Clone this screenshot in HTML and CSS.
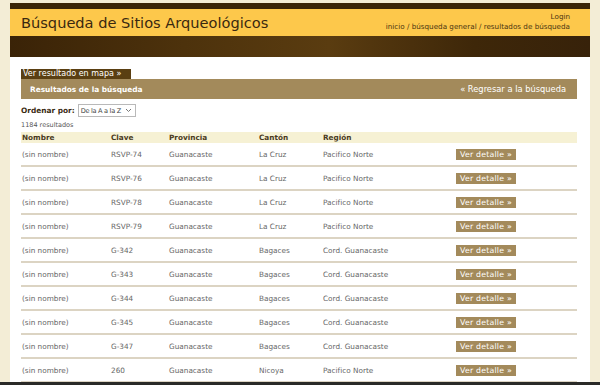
FILE: index.html
```html
<!DOCTYPE html>
<html lang="es">
<head>
<meta charset="utf-8">
<title>Búsqueda de Sitios Arqueológicos</title>
<link rel="stylesheet" href="styles.css">
</head>
<body>
<div class="page">
  <div class="topband"></div>
  <header class="header">
    <h1 class="title">Búsqueda de Sitios Arqueológicos</h1>
    <div class="nav">
      <a class="login" href="#">Login</a>
      <div class="crumbs">inicio / búsqueda general / resultados de búsqueda</div>
    </div>
  </header>
  <div class="darkband"></div>
  <main class="content">
    <a class="maptab" href="#">Ver resultado en mapa »</a>
    <div class="bar">
      <span class="bar-title">Resultados de la búsqueda</span>
      <a class="bar-back" href="#">« Regresar a la búsqueda</a>
    </div>
    <div class="order">
      <span class="order-label">Ordenar por:</span>
      <span class="select">De la A a la Z <svg class="chev" width="7" height="5" viewBox="0 0 7 5"><path d="M1 1l2.5 2.5L6 1" fill="none" stroke="#777" stroke-width="1"/></svg></span>
    </div>
    <div class="count">1184 resultados</div>
    <table class="results">
      <thead>
        <tr><th>Nombre</th><th>Clave</th><th>Provincia</th><th>Cantón</th><th>Región</th><th></th></tr>
      </thead>
      <tbody>
        <tr><td>(sin nombre)</td><td>RSVP-74</td><td>Guanacaste</td><td>La Cruz</td><td>Pacifico Norte</td><td><a class="btn" href="#">Ver detalle »</a></td></tr>
        <tr><td>(sin nombre)</td><td>RSVP-76</td><td>Guanacaste</td><td>La Cruz</td><td>Pacifico Norte</td><td><a class="btn" href="#">Ver detalle »</a></td></tr>
        <tr><td>(sin nombre)</td><td>RSVP-78</td><td>Guanacaste</td><td>La Cruz</td><td>Pacifico Norte</td><td><a class="btn" href="#">Ver detalle »</a></td></tr>
        <tr><td>(sin nombre)</td><td>RSVP-79</td><td>Guanacaste</td><td>La Cruz</td><td>Pacifico Norte</td><td><a class="btn" href="#">Ver detalle »</a></td></tr>
        <tr><td>(sin nombre)</td><td>G-342</td><td>Guanacaste</td><td>Bagaces</td><td>Cord. Guanacaste</td><td><a class="btn" href="#">Ver detalle »</a></td></tr>
        <tr><td>(sin nombre)</td><td>G-343</td><td>Guanacaste</td><td>Bagaces</td><td>Cord. Guanacaste</td><td><a class="btn" href="#">Ver detalle »</a></td></tr>
        <tr><td>(sin nombre)</td><td>G-344</td><td>Guanacaste</td><td>Bagaces</td><td>Cord. Guanacaste</td><td><a class="btn" href="#">Ver detalle »</a></td></tr>
        <tr><td>(sin nombre)</td><td>G-345</td><td>Guanacaste</td><td>Bagaces</td><td>Cord. Guanacaste</td><td><a class="btn" href="#">Ver detalle »</a></td></tr>
        <tr><td>(sin nombre)</td><td>G-347</td><td>Guanacaste</td><td>Bagaces</td><td>Cord. Guanacaste</td><td><a class="btn" href="#">Ver detalle »</a></td></tr>
        <tr><td>(sin nombre)</td><td>260</td><td>Guanacaste</td><td>Nicoya</td><td>Pacifico Norte</td><td><a class="btn" href="#">Ver detalle »</a></td></tr>
      </tbody>
    </table>
  </main>
</div>
<div class="bottomstrip"></div>
</body>
</html>
```
FILE: styles.css
```css
html, body {
  margin: 0;
  padding: 0;
  background: #f3edd6;
  font-family: "DejaVu Sans", "Liberation Sans", sans-serif;
  overflow: hidden;
}
a { text-decoration: none; color: inherit; }

.page {
  margin: 3px 0 0 10px;
  width: 580px;
  background: #fff;
  min-height: 400px;
}
.topband {
  height: 6px;
  background: #3a2508;
}
.header {
  height: 27px;
  background: #fdc84b;
  display: flex;
  justify-content: space-between;
  align-items: flex-start;
  padding: 0 20px 0 11px;
}
.title {
  margin: 5px 0 0 0;
  font-size: 14.6px;
  font-weight: normal;
  color: #3a2810;
  line-height: 18px;
}
.nav {
  display: flex;
  flex-direction: column;
  align-items: flex-end;
  font-size: 7.2px;
  color: #4a3410;
  line-height: 10px;
  padding-top: 3px;
}
.darkband {
  height: 21px;
  background: linear-gradient(90deg, #3a2307 0%, #4d320c 30%, #5a3c10 55%, #3e2709 80%, #37220a 100%);
}
.content {
  padding: 12px 13px 0 11px;
}
.maptab {
  display: block;
  width: 108px;
  height: 10px;
  line-height: 10px;
  padding-left: 2px;
  background: #5a3f12;
  color: #fff;
  font-size: 8px;
  white-space: nowrap;
}
.bar {
  height: 20px;
  background: #a38a5b;
  display: flex;
  justify-content: space-between;
  align-items: center;
  padding: 0 11px 0 9px;
  color: #fff;
  font-size: 8px;
}
.bar-title { font-weight: bold; font-size: 7.4px; }
.bar-back { font-size: 8.3px; }
.order {
  display: flex;
  align-items: center;
  gap: 3px;
  margin-top: 5px;
  height: 13px;
}
.order-label {
  font-weight: bold;
  font-size: 7.4px;
  color: #3a2a12;
}
.select {
  display: inline-flex;
  align-items: center;
  gap: 4px;
  height: 11px;
  border: 1px solid #b9b9b9;
  padding: 0 3px 0 2px;
  font-size: 6.6px;
  color: #444;
  letter-spacing: -0.3px;
}
.count {
  margin-top: 4px;
  margin-bottom: 2px;
  font-size: 6.5px;
  color: #555;
  line-height: 9px;
}
.results {
  width: 100%;
  table-layout: fixed;
  border-collapse: collapse;
  font-size: 7.3px;
  color: #666;
}
.results th {
  background: #f6f1d4;
  text-align: left;
  font-weight: bold;
  color: #4a3a22;
  height: 11px;
  padding: 0 0 0 1px;
  line-height: 11px;
}
.results th:nth-child(1) { width: 88px; }
.results th:nth-child(2) { width: 57px; }
.results th:nth-child(3) { width: 89px; }
.results th:nth-child(4) { width: 63px; }
.results th:nth-child(5) { width: 132px; }
.results td {
  height: 22px;
  padding: 0 0 0 1px;
  border-bottom: 2px solid #dcd4c3;
  vertical-align: middle;
  white-space: nowrap;
}
.btn {
  display: inline-block;
  width: 60px;
  height: 11px;
  line-height: 11px;
  text-align: center;
  background: #a38a5b;
  color: #fff;
  font-size: 7.8px;
  letter-spacing: 0.2px;
}
.bottomstrip {
  position: fixed;
  left: 0;
  right: 0;
  bottom: 0;
  height: 3px;
  background: #2a2a28;
}
```
